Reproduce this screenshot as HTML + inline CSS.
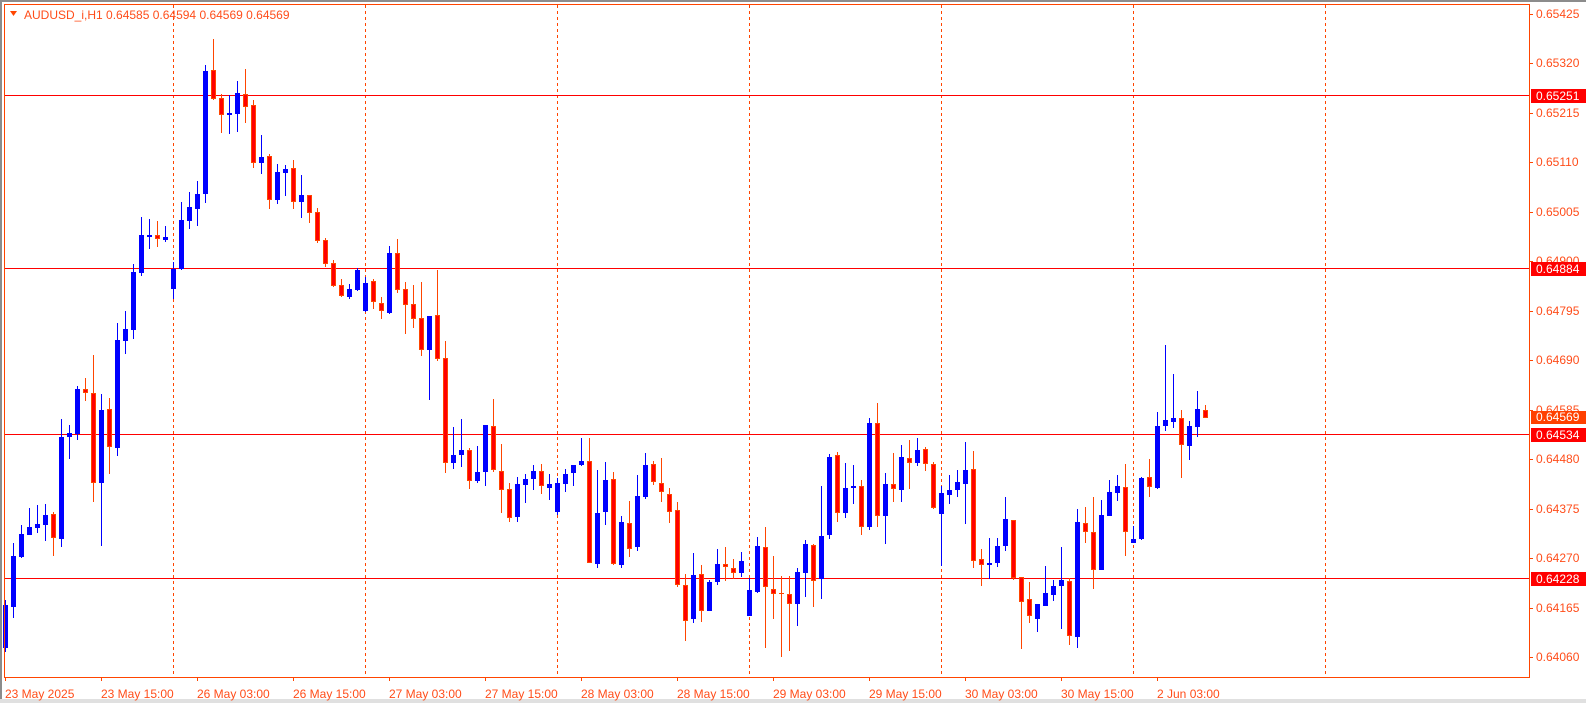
<!DOCTYPE html>
<html><head><meta charset="utf-8">
<style>
html,body{margin:0;padding:0;background:#fff;width:1586px;height:703px;overflow:hidden}
svg{display:block}
text{font-family:"Liberation Sans",sans-serif;font-size:12px}
</style></head>
<body>
<svg id="s" width="1586" height="703" xmlns="http://www.w3.org/2000/svg">
<rect x="0" y="0" width="1586" height="703" fill="#fff"/>
<rect x="0" y="0" width="1586" height="2" fill="#8c8c8c"/>
<rect x="0" y="0" width="2" height="703" fill="#8c8c8c"/>
<rect x="0" y="699" width="1586" height="4" fill="#e0e0e0"/>
<g stroke="#ff4500" stroke-width="1" stroke-dasharray="3,3">
<line x1="173.5" y1="5" x2="173.5" y2="677"/>
<line x1="365.5" y1="5" x2="365.5" y2="677"/>
<line x1="557.5" y1="5" x2="557.5" y2="677"/>
<line x1="749.5" y1="5" x2="749.5" y2="677"/>
<line x1="941.5" y1="5" x2="941.5" y2="677"/>
<line x1="1133.5" y1="5" x2="1133.5" y2="677"/>
<line x1="1325.5" y1="5" x2="1325.5" y2="677"/>
</g>
<g fill="#ff0000">
<rect x="4" y="95" width="1525" height="1"/>
<rect x="4" y="268" width="1525" height="1"/>
<rect x="4" y="434" width="1525" height="1"/>
<rect x="4" y="578" width="1525" height="1"/>
</g>
<g id="c"></g>
<rect x="4.5" y="4.5" width="1525" height="673" fill="none" stroke="#ff4500"/>
<g fill="#ff4500">
<rect x="1529" y="14" width="4" height="1"/><rect x="1529" y="63" width="4" height="1"/>
<rect x="1529" y="113" width="4" height="1"/><rect x="1529" y="162" width="4" height="1"/>
<rect x="1529" y="212" width="4" height="1"/><rect x="1529" y="261" width="4" height="1"/>
<rect x="1529" y="311" width="4" height="1"/><rect x="1529" y="360" width="4" height="1"/>
<rect x="1529" y="410" width="4" height="1"/><rect x="1529" y="459" width="4" height="1"/>
<rect x="1529" y="509" width="4" height="1"/><rect x="1529" y="558" width="4" height="1"/>
<rect x="1529" y="608" width="4" height="1"/><rect x="1529" y="657" width="4" height="1"/>
</g>
<g fill="#ff4d1a">
<text x="1536" y="18">0.65425</text><text x="1536" y="67">0.65320</text>
<text x="1536" y="117">0.65215</text><text x="1536" y="166">0.65110</text>
<text x="1536" y="216">0.65005</text><text x="1536" y="265">0.64900</text>
<text x="1536" y="315">0.64795</text><text x="1536" y="364">0.64690</text>
<text x="1536" y="414">0.64585</text><text x="1536" y="463">0.64480</text>
<text x="1536" y="513">0.64375</text><text x="1536" y="562">0.64270</text>
<text x="1536" y="612">0.64165</text><text x="1536" y="661">0.64060</text>
</g>
<rect x="1531" y="89" width="55" height="14" fill="#ff0000"/>
<rect x="1531" y="262" width="55" height="14" fill="#ff0000"/>
<rect x="1531" y="411" width="55" height="13" fill="#ff4000"/>
<rect x="1531" y="428" width="55" height="14" fill="#ff0000"/>
<rect x="1531" y="572" width="55" height="14" fill="#ff0000"/>
<g fill="#fff">
<text x="1536" y="100">0.65251</text>
<text x="1536" y="273">0.64884</text>
<text x="1536" y="421">0.64569</text>
<text x="1536" y="439">0.64534</text>
<text x="1536" y="583">0.64228</text>
</g>
<g fill="#ff4500">
<rect x="5" y="677" width="1" height="4"/><rect x="101" y="677" width="1" height="4"/>
<rect x="197" y="677" width="1" height="4"/><rect x="293" y="677" width="1" height="4"/>
<rect x="389" y="677" width="1" height="4"/><rect x="485" y="677" width="1" height="4"/>
<rect x="581" y="677" width="1" height="4"/><rect x="677" y="677" width="1" height="4"/>
<rect x="773" y="677" width="1" height="4"/><rect x="869" y="677" width="1" height="4"/>
<rect x="965" y="677" width="1" height="4"/><rect x="1061" y="677" width="1" height="4"/>
<rect x="1157" y="677" width="1" height="4"/>
</g>
<g fill="#ff4d1a">
<text x="5" y="698">23 May 2025</text>
<text x="101" y="698">23 May 15:00</text>
<text x="197" y="698">26 May 03:00</text>
<text x="293" y="698">26 May 15:00</text>
<text x="389" y="698">27 May 03:00</text>
<text x="485" y="698">27 May 15:00</text>
<text x="581" y="698">28 May 03:00</text>
<text x="677" y="698">28 May 15:00</text>
<text x="773" y="698">29 May 03:00</text>
<text x="869" y="698">29 May 15:00</text>
<text x="965" y="698">30 May 03:00</text>
<text x="1061" y="698">30 May 15:00</text>
<text x="1157" y="698">2 Jun 03:00</text>
</g>
<polygon points="10,11 17,11 13.5,16" fill="#ff4500"/>
<text x="24" y="19" fill="#ff4d1a">AUDUSD_i,H1  0.64585 0.64594 0.64569 0.64569</text>
</svg>
<script>
var D=[
["b",600,605,648,652],["b",543,556,607,618],["b",525,534,557,558],["b",508,527,535,535],["b",505,524,528,533],
["b",504,515,525,541],["r",512,514,538,556],["b",419,437,539,547],["b",425,433,437,459],["b",386,389,434,440],
["r",378,389,393,401],["r",355,393,483,502],["b",394,410,483,546],["r",398,409,447,474],["b",323,340,448,456],
["b",311,329,341,354],["b",264,272,330,339],["b",217,235,273,276],["b",219,235,237,249],["r",221,235,239,247],
["b",226,237,240,242],["b",262,269,289,299],["b",202,220,269,270],["b",192,207,221,229],["b",181,194,209,226],
["b",65,71,194,203],["r",39,70,99,100],["r",94,98,115,133],["b",95,113,115,134],["b",81,93,114,132],
["r",69,94,107,123],["r",100,105,163,168],["b",135,157,163,174],["r",154,156,200,209],["b",164,172,200,204],
["b",165,169,173,196],["r",160,168,202,209],["b",175,195,202,218],["r",195,195,213,223],["r",208,212,241,243],
["r",238,240,264,267],["r",260,263,286,287],["r",279,285,296,297],["b",284,289,297,299],["b",268,270,290,291],
["b",277,283,311,312],["r",279,281,302,309],["r",297,303,311,319],["b",246,253,313,314],["r",239,253,290,293],
["r",282,289,305,334],["r",285,304,319,328],["r",282,318,350,356],["b",316,316,350,400],["r",270,315,359,361],
["r",341,358,463,473],["b",427,455,463,469],["b",419,450,455,467],["r",448,450,481,489],["b",446,472,481,483],
["b",425,425,472,486],["r",399,426,470,472],["r",444,471,490,513],["r",483,489,518,522],["b",477,484,517,522],
["b",474,479,485,503],["b",465,471,479,490],["r",464,471,486,494],["b",474,484,488,500],["b",478,483,512,515],
["b",469,474,484,492],["b",465,465,473,486],["b",438,461,465,466],["r",438,461,563,563],["b",470,513,564,568],
["b",462,480,512,525],["r",472,479,564,565],["b",516,522,565,568],["r",501,523,549,557],["b",475,496,547,551],
["b",453,465,497,499],["r",461,464,482,485],["r",458,483,492,502],["r",488,494,512,523],["r",502,510,585,587],
["r",574,585,621,641],["b",553,575,619,623],["r",565,574,611,622],["b",580,582,611,611],["b",549,564,582,585],
["r",547,564,567,581],["r",559,568,573,579],["b",552,561,573,577],["b",578,590,616,616],["b",537,546,592,593],
["r",527,547,587,648],["r",556,589,594,619],["r",576,593,593,657],["r",576,594,604,651],["b",568,572,604,626],
["b",540,544,573,597],["r",544,545,581,607],["b",486,536,579,599],["b",454,457,535,539],["r",452,455,513,522],
["b",463,488,513,518],["b",465,486,488,504],["r",480,486,527,535],["b",418,423,527,530],["r",403,423,516,527],
["b",473,484,516,544],["r",453,484,489,502],["b",445,457,490,502],["r",440,458,463,489],["b",438,450,463,466],
["r",447,449,464,471],["r",462,464,508,509],["b",486,493,514,566],["b",475,490,495,504],["b",470,482,490,497],
["b",442,470,484,524],["r",451,469,561,568],["r",549,559,565,586],["b",538,563,565,579],["b",538,546,563,567],
["b",497,519,546,551],["r",520,520,578,580],["r",577,577,602,649],["r",582,599,616,623],["b",604,604,619,632],
["b",566,593,606,606],["b",580,586,595,601],["b",547,580,586,629],["r",578,581,636,645],["b",509,522,637,648],
["r",507,523,532,543],["r",497,532,570,589],["b",500,515,570,570],["b",480,492,516,516],["b",475,486,493,501],
["r",464,487,532,556],["b",526,539,543,543],["b",477,478,539,540],["r",459,477,487,497],["b",412,426,488,489],
["b",345,420,426,431],["b",374,418,422,428],["r",410,418,445,478],["b",421,426,446,460],["b",391,409,427,437],
["r",405,410,418,418]];
var g=document.getElementById("c"),h="";
for(var k=0;k<D.length;k++){var d=D[k],c=5+8*k,bl=d[0]=="b";
var wc=bl?"#0000ff":"#ff4500";
h+='<rect x="'+c+'" y="'+d[1]+'" width="1" height="'+Math.max(1,d[4]-d[1])+'" fill="'+wc+'"/>';
var bh=d[3]-d[2];
if(bl){h+='<rect x="'+(c-2)+'" y="'+d[2]+'" width="5" height="'+Math.max(1,bh)+'" fill="#0000ff"/>';}
else{ if(bh<3){h+='<rect x="'+(c-2)+'" y="'+d[2]+'" width="5" height="'+Math.max(1,bh)+'" fill="#ff4500"/>';}
else h+='<rect x="'+(c-1.5)+'" y="'+(d[2]+0.5)+'" width="4" height="'+(bh-1)+'" fill="#ff0000" stroke="#ff4500" stroke-width="1"/>';}
}
g.innerHTML=h;
</script>
</body></html>
